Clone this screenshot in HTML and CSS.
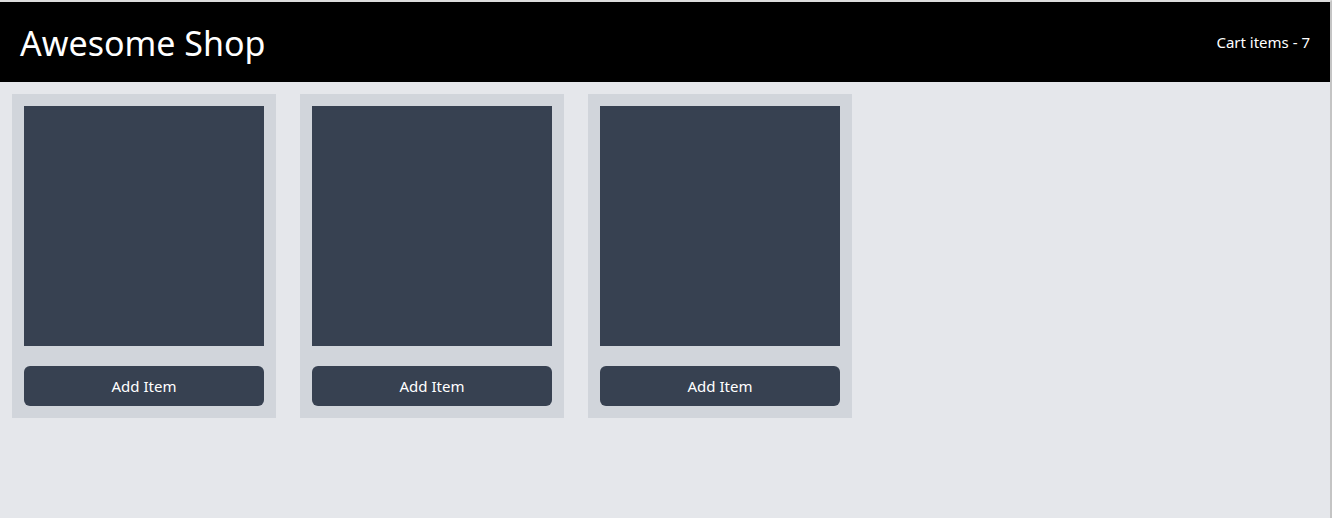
FILE: index.html
```html
<!DOCTYPE html>
<html lang="en">
<head>
    <meta charset="UTF-8" />
    <title>Awesome Shop</title>
    <link rel="stylesheet" href="styles.css">
</head>
<body>
    <div class="page">
        <header class="topbar">
            <h1 class="brand">Awesome Shop</h1>
            <span class="cart-count">Cart items - 7</span>
        </header>

        <main class="products">
            <div class="card">
                <div class="thumb"></div>
                <button class="add-btn">Add Item</button>
            </div>
            <div class="card">
                <div class="thumb"></div>
                <button class="add-btn">Add Item</button>
            </div>
            <div class="card">
                <div class="thumb"></div>
                <button class="add-btn">Add Item</button>
            </div>
        </main>
    </div>
</body>
</html>
```

FILE: styles.css
```css
html, body {
    margin: 0;
    padding: 0;
    height: 100%;
}

body {
    font-family: 'Noto Sans', 'Open Sans', sans-serif;
    background-color: #e5e7eb;
}

.page {
    height: 100%;
    box-sizing: border-box;
    border-top: 2px solid #dcdcdc;
    border-right: 2px solid #c4c4c4;
    display: flex;
    flex-direction: column;
}

.topbar {
    background-color: #000;
    color: #fff;
    height: 80px;
    padding: 0 20px;
    display: flex;
    justify-content: space-between;
    align-items: center;
    flex-shrink: 0;
}

.brand {
    margin: 2px 0 0;
    font-size: 34px;
    font-weight: 400;
    line-height: 1;
}

.cart-count {
    font-size: 15px;
}

.products {
    flex: 1;
    padding: 12px;
    display: flex;
    align-items: flex-start;
    gap: 24px;
}

.card {
    background-color: #d1d5db;
    padding: 12px;
    display: flex;
    flex-direction: column;
    gap: 20px;
}

.thumb {
    width: 240px;
    height: 240px;
    background-color: #374151;
}

.add-btn {
    height: 40px;
    border: none;
    border-radius: 6px;
    background-color: #374151;
    color: #fff;
    font-family: inherit;
    font-size: 15px;
    cursor: pointer;
}
```
